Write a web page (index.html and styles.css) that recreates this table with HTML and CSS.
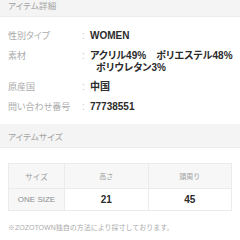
FILE: index.html
```html
<!DOCTYPE html>
<html lang="ja">
<head>
<meta charset="utf-8">
<title>アイテム詳細</title>
<link rel="stylesheet" href="styles.css">
</head>
<body>
<div class="page">
  <section class="section">
    <h2 class="section-title">アイテム詳細</h2>
    <dl class="spec">
      <div class="spec-row">
        <dt class="spec-label">性別タイプ</dt>
        <dd class="spec-value">WOMEN</dd>
      </div>
      <div class="spec-row">
        <dt class="spec-label">素材</dt>
        <dd class="spec-value">アクリル49%　ポリエステル48%<br><span class="indent">ポリウレタン3%</span></dd>
      </div>
      <div class="spec-row">
        <dt class="spec-label">原産国</dt>
        <dd class="spec-value">中国</dd>
      </div>
      <div class="spec-row">
        <dt class="spec-label">問い合わせ番号</dt>
        <dd class="spec-value">77738551</dd>
      </div>
    </dl>
  </section>
  <section class="section">
    <h2 class="section-title">アイテムサイズ</h2>
    <div class="size-wrap">
      <table class="size-table">
        <thead>
          <tr>
            <th class="col-size">サイズ</th>
            <th class="col-head">高さ</th>
            <th class="col-head">頭周り</th>
          </tr>
        </thead>
        <tbody>
          <tr>
            <th class="col-size row-name">ONE SIZE</th>
            <td class="cell">21</td>
            <td class="cell">45</td>
          </tr>
        </tbody>
      </table>
      <p class="note">※ZOZOTOWN独自の方法により採寸しております。</p>
    </div>
  </section>
</div>
</body>
</html>
```

FILE: styles.css
```css
html, body {
  margin: 0;
  padding: 0;
  background: #ffffff;
}

body {
  font-family: "Liberation Sans", "Noto Sans CJK JP", sans-serif;
  color: #333333;
  overflow: hidden;
}

.page {
  margin-top: -7px;
}

.section-title {
  margin: 0;
  height: 24px;
  display: flex;
  align-items: center;
  padding: 0 8px;
  background: #f4f4f4;
  border-top: 1px solid #f4f4f4;
  border-bottom: 1px solid #ececec;
  box-sizing: border-box;
  font-size: 8.5px;
  font-weight: normal;
  color: #a3a3a3;
  font-feature-settings: "palt";
  letter-spacing: 0.2px;
}

.spec {
  margin: 0;
  padding: 13px 8px 11.5px;
  display: flex;
  flex-direction: column;
  gap: 7.5px;
}

.spec-row {
  display: flex;
  line-height: 12px;
}

.spec-label {
  width: 74px;
  flex: none;
  font-size: 9px;
  color: #ababab;
  font-feature-settings: "palt";
}

.spec-value {
  margin: 0;
  position: relative;
  padding-left: 8px;
  font-size: 10px;
  font-weight: bold;
  color: #2b2b2b;
  white-space: nowrap;
  font-feature-settings: "palt";
}

.spec-value::before {
  content: ":";
  position: absolute;
  left: 0;
  top: 0;
  font-weight: normal;
  color: #c4c4c4;
}

.indent {
  padding-left: 6px;
}

.size-wrap {
  padding: 15px 8px 0;
}

.size-table {
  width: 224px;
  border-collapse: collapse;
  table-layout: fixed;
}

.size-table th,
.size-table td {
  border: 1px solid #ebebeb;
  text-align: center;
  padding: 0;
}

.col-size {
  width: 55px;
  background: #f7f7f7;
  font-size: 7.5px;
  font-weight: normal;
  color: #9a9a9a;
}

.col-head {
  background: #f7f7f7;
  font-size: 7px;
  font-weight: normal;
  color: #a0a0a0;
}

thead tr {
  height: 25px;
}

tbody tr {
  height: 22px;
}

.row-name {
  font-size: 8px;
  color: #8e8e8e;
}

.cell {
  background: #ffffff;
  font-size: 10px;
  font-weight: bold;
  color: #2b2b2b;
}

.note {
  margin: 12px 0 0;
  font-size: 7px;
  line-height: 10px;
  color: #ababab;
  white-space: nowrap;
}
```
